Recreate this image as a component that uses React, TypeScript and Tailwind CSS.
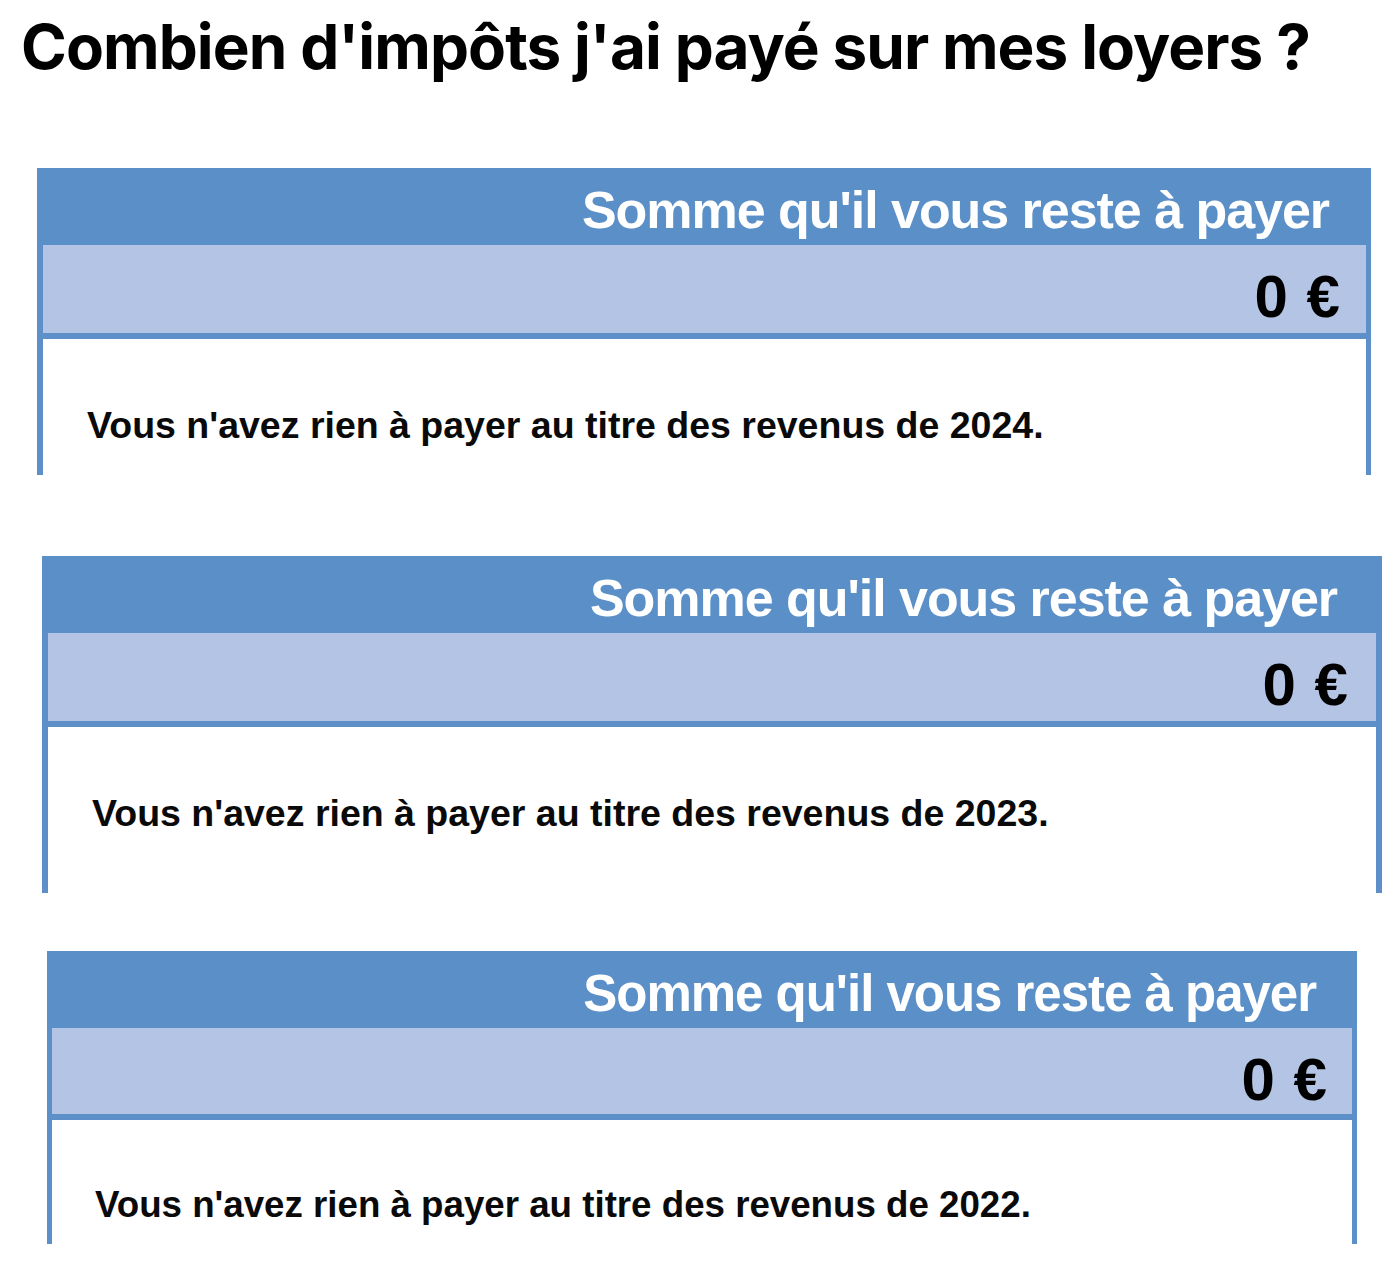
const font = { fontFamily: '"Liberation Sans", Arial, Helvetica, sans-serif' };
const titreFont = { fontFamily: 'Inter, "Liberation Sans", Arial, sans-serif' };

type Solde = {
  annee: number;
  // full class strings per block, so Tailwind picks them up
  wrap: string;
  side: string;
  titre: string;
  montantPad: string;
  montantH: string;
  corps: string;
};

const soldes: Solde[] = [
  {
    annee: 2024,
    wrap: 'mt-[90px] ml-[37px] w-[1334px]',
    side: 'border-l-[6px] border-r-[5px]',
    titre: 'pr-[42px] text-[52px]',
    montantPad: 'pr-[26px]',
    montantH: 'h-[94px]',
    corps: 'h-[136px] pl-[44px] pt-[65px] text-[37.5px]',
  },
  {
    annee: 2023,
    wrap: 'mt-[81px] ml-[42px] w-[1340px]',
    side: 'border-l-[6px] border-r-[6px]',
    titre: 'pr-[45px] text-[52px]',
    montantPad: 'pr-[28px]',
    montantH: 'h-[94px]',
    corps: 'h-[166px] pl-[44px] pt-[65px] text-[37.5px]',
  },
  {
    annee: 2022,
    wrap: 'mt-[58px] ml-[47px] w-[1310px]',
    side: 'border-l-[5px] border-r-[5px]',
    titre: 'pr-[41px] text-[51px]',
    montantPad: 'pr-[25px]',
    montantH: 'h-[92px]',
    corps: 'h-[124px] pl-[43px] pt-[64px] text-[36.7px]',
  },
];

function CarteSolde({ s }: { s: Solde }) {
  return (
    <div className={s.wrap}>
      <div className={`h-[77px] bg-[#5b8fc7] pt-[8px] text-right font-bold leading-[69px] tracking-[-0.02em] text-white ${s.titre}`}>
        Somme qu'il vous reste à payer
      </div>
      <div className={`border-b-[6px] border-[#5d90c8] bg-[#b4c4e4] pt-[22px] text-right text-[60px] font-bold leading-none text-black [word-spacing:2px] ${s.side} ${s.montantH} ${s.montantPad}`}>
        0 €
      </div>
      <div className={`border-[#5d90c8] bg-white font-bold leading-[42px] text-[#0a0a0a] ${s.side} ${s.corps}`}>
        Vous n'avez rien à payer au titre des revenus de {s.annee}.
      </div>
    </div>
  );
}

export default function App() {
  return (
    <div className="min-h-[1278px] w-[1392px] bg-white" style={font}>
      <h1
        className="pl-[21px] pt-[16px] text-[62px] font-bold leading-none tracking-[-0.015em] text-black"
        style={titreFont}
      >
        Combien d'impôts j'ai payé sur mes loyers ?
      </h1>
      {soldes.map((s) => (
        <CarteSolde key={s.annee} s={s} />
      ))}
    </div>
  );
}
